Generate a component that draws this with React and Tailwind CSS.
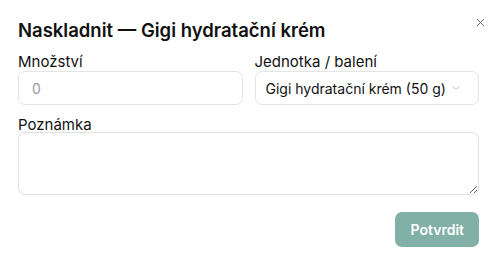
import { X, ChevronDown } from "lucide-react"

export default function App() {
  return (
    <div className="relative h-[264px] w-[502px] bg-white font-['Inter',sans-serif] text-[#111]">
      <button type="button" className="absolute right-[15px] top-[16px] text-[#555]" aria-label="Zavřít">
        <X className="h-[13px] w-[13px]" strokeWidth={1.6} />
      </button>
      <div className="flex flex-col pl-[18px] pr-[23px] pt-[18px]">
        <h2 className="text-[18.5px] font-semibold leading-[24px]">Naskladnit — Gigi hydratační krém</h2>
        <div className="mt-[12px] grid grid-cols-2 gap-[12px]">
          <label className="flex flex-col">
            <span className="text-[15px] leading-[15px]">Množství</span>
            <input
              type="text"
              placeholder="0"
              className="mt-[2px] h-[34px] rounded-[7px] border border-[#e4e4e4] px-[13px] text-[14px] placeholder:text-[#999] outline-none"
            />
          </label>
          <label className="flex flex-col">
            <span className="text-[15px] leading-[15px]">Jednotka / balení</span>
            <div className="mt-[2px] flex h-[34px] items-center justify-between rounded-[7px] border border-[#e4e4e4] pl-[10px] pr-[16px] text-[14px]">
              <span>Gigi hydratační krém (50 g)</span>
              <ChevronDown className="h-[12px] w-[12px] text-[#aaa]" strokeWidth={1.5} />
            </div>
          </label>
        </div>
        <label className="mt-[12px] flex flex-col">
          <span className="text-[15px] leading-[15px]">Poznámka</span>
          <textarea className="h-[63px] rounded-[7px] border border-[#e0e0e0] px-[10px] py-[6px] text-[14px] outline-none" />
        </label>
        <div className="mt-[17px] flex justify-end">
          <button type="button" className="h-[35px] rounded-[7px] bg-[#80b0a6] px-[15px] text-[14px] font-semibold text-white">
            Potvrdit
          </button>
        </div>
      </div>
    </div>
  )
}
